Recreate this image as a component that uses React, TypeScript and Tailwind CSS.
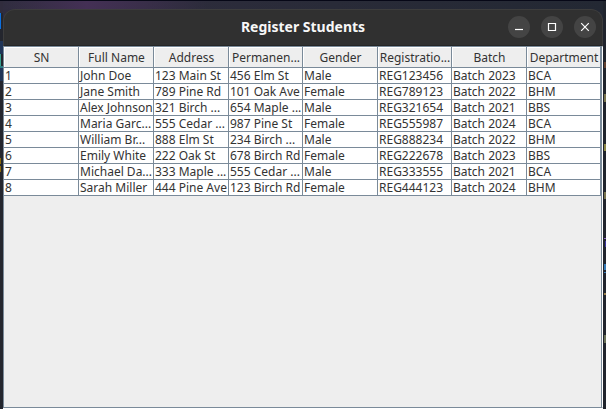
const columns = ['SN', 'Full Name', 'Address', 'Permanen...', 'Gender', 'Registratio...', 'Batch', 'Department'];

const rows = [
  ['1', 'John Doe', '123 Main St', '456 Elm St', 'Male', 'REG123456', 'Batch 2023', 'BCA'],
  ['2', 'Jane Smith', '789 Pine Rd', '101 Oak Ave', 'Female', 'REG789123', 'Batch 2022', 'BHM'],
  ['3', 'Alex Johnson', '321 Birch ...', '654 Maple ...', 'Male', 'REG321654', 'Batch 2021', 'BBS'],
  ['4', 'Maria Garc...', '555 Cedar ...', '987 Pine St', 'Female', 'REG555987', 'Batch 2024', 'BCA'],
  ['5', 'William Br...', '888 Elm St', '234 Birch ...', 'Male', 'REG888234', 'Batch 2022', 'BHM'],
  ['6', 'Emily White', '222 Oak St', '678 Birch Rd', 'Female', 'REG222678', 'Batch 2023', 'BBS'],
  ['7', 'Michael Da...', '333 Maple ...', '555 Cedar ...', 'Male', 'REG333555', 'Batch 2021', 'BCA'],
  ['8', 'Sarah Miller', '444 Pine Ave', '123 Birch Rd', 'Female', 'REG444123', 'Batch 2024', 'BHM'],
];

const grid = 'grid grid-cols-[75px_75px_75px_74px_75px_74px_75px_74px]';

function WindowButton({ d }: { d: string }) {
  return (
    <button className="flex size-[22px] items-center justify-center rounded-full bg-[#444444]">
      <svg width="22" height="22" viewBox="0 0 22 22" fill="none" stroke="#fff" strokeWidth="1.2">
        <path d={d} />
      </svg>
    </button>
  );
}

function TitleBar() {
  return (
    <header className="grid h-[37px] grid-cols-[1fr_auto_1fr] items-center rounded-t-xl border border-b-0 border-[#3d3d3d] bg-[#303030] pr-[6px] pb-[2px] shadow-[inset_0_-1px_0_#252525]">
      <span />
      <h1 className="translate-x-[3px] -translate-y-px font-['Noto_Sans',sans-serif] text-[14px] font-bold whitespace-nowrap text-[#f7f7f7]">
        Register Students
      </h1>
      <div className="flex justify-end gap-[11px]">
        <WindowButton d="M7 13.5h8" />
        <WindowButton d="M7.5 7.5h7v7h-7z" />
        <WindowButton d="M7.2 7.2l7.6 7.6M14.8 7.2l-7.6 7.6" />
      </div>
    </header>
  );
}

function StudentTable() {
  return (
    <div className="font-['Noto_Sans',sans-serif] text-[12px] leading-[15px] whitespace-nowrap text-[#333333]">
      <div className={grid}>
        {columns.map((name) => (
          <div
            key={name}
            className="flex h-[21px] items-center justify-center overflow-hidden border-r border-b border-[#7a8a99] bg-[#eeeeee] pl-px shadow-[inset_1px_1px_0_#fff]"
          >
            {name}
          </div>
        ))}
      </div>
      {rows.map((row) => (
        <div key={row[0]} className={grid}>
          {row.map((value, i) => (
            <div key={i} className="h-4 overflow-hidden border-r border-b border-[#7a8a99] bg-white pl-px">
              {value}
            </div>
          ))}
        </div>
      ))}
    </div>
  );
}

export default function App() {
  return (
    <div className="flex h-[409px] w-[606px] overflow-hidden bg-[#22262f]">
      <aside className="flex w-[3px] shrink-0 flex-col bg-[#24262e]">
        <div className="h-px bg-[#060716]" />
        <div className="h-3 bg-[#302c3d]" />
        <div className="h-4 w-px bg-[#0b70e0]" />
        <div className="mt-3 h-[13px] bg-[#203558]" />
        <div className="h-3 w-px bg-[#35a08f]" />
        <div className="h-[2px] bg-[#2c7c83]" />
        <div className="h-[13px] bg-[#203558]" />
        <div className="mt-[77px] h-[6px] w-px bg-[#8c6a0a]" />
        <div className="mt-[2px] h-[6px] w-px bg-[#8c6a0a]" />
      </aside>
      <main className="flex w-[600px] shrink-0 flex-col">
        <div className="h-px bg-[#060716]" />
        <div className="h-2 bg-linear-to-r from-[#302d3f] via-[#292b38] via-55% to-[#232833]">
          <div className="h-2 bg-[linear-gradient(to_right,transparent,#443055_14%,transparent_34%)]" />
        </div>
        <div className="bg-[linear-gradient(to_right,#302d3f,#232833)]">
          <TitleBar />
        </div>
        <div className="flex h-[362px] flex-col border-t border-r border-b border-l border-t-[#7a8a99] border-r-white border-b-[#7a8a99] border-l-[#7a8a99] bg-[#eeeeee]">
          <div className="flex-1 border-r border-[#7a8a99]">
            <StudentTable />
          </div>
        </div>
        <div className="h-px bg-white" />
      </main>
      <aside className="flex w-[3px] shrink-0 flex-col items-end bg-[#20242d]">
        <div className="h-px w-full bg-[#060716]" />
        <div className="mt-[61px] h-[6px] w-[2px] bg-[#61402f]" />
        <div className="mt-[26px] h-2 w-[2px] bg-[#77734d]" />
        <div className="mt-[42px] h-[7px] w-[2px] bg-[#8c8847]" />
        <div className="mt-[41px] h-[7px] w-[2px] bg-[#77734d]" />
        <div className="mt-[39px] h-px w-[2px] bg-[#8960bd]" />
        <div className="mt-[2px] h-[6px] w-px bg-[#3c36a0]" />
        <div className="mt-[17px] h-[6px] w-[2px] bg-[#3479b5]" />
        <div className="mt-[2px] h-px w-[2px] bg-[#3479b5]" />
        <div className="mt-[20px] h-[2px] w-[2px] bg-[#9b804d]" />
        <div className="mt-[40px] h-[8px] w-[2px] bg-[#686f57]" />
      </aside>
    </div>
  );
}
